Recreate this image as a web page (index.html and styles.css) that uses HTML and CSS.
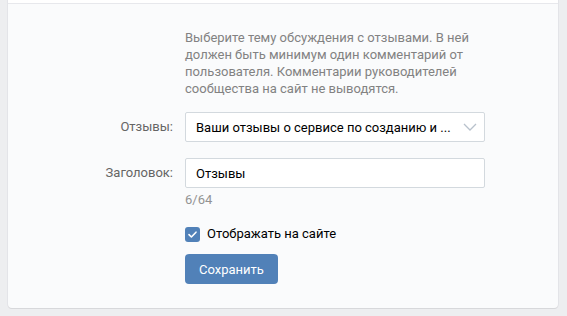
FILE: index.html
```html
<!DOCTYPE html>
<html lang="ru">
<head>
    <meta charset="UTF-8">
    <meta name="viewport" content="width=device-width, initial-scale=1.0">
    <title>Отзывы</title>
    <link rel="stylesheet" href="styles.css">
</head>
<body>
    <div class="card">
        <div class="card-top"></div>
        <div class="settings">
            <div class="row">
                <div class="row-label"></div>
                <div class="row-control">
                    <p class="hint">Выберите тему обсуждения с отзывами. В ней должен быть минимум один комментарий от пользователя. Комментарии руководителей сообщества на сайт не выводятся.</p>
                </div>
            </div>
            <div class="row row-field">
                <div class="row-label">Отзывы:</div>
                <div class="row-control">
                    <div class="dropdown">
                        <span class="dropdown-value">Ваши отзывы о сервисе по созданию и ...</span>
                        <svg class="dropdown-arrow" width="14" height="8" viewBox="0 0 14 8">
                            <path d="M1 1l6 6 6-6" fill="none" stroke="#b8c1cc" stroke-width="1.3"/>
                        </svg>
                    </div>
                </div>
            </div>
            <div class="row">
                <div class="row-label">Заголовок:</div>
                <div class="row-control">
                    <input class="text-input" type="text" value="Отзывы">
                    <div class="counter">6/64</div>
                </div>
            </div>
            <div class="row">
                <div class="row-label"></div>
                <div class="row-control">
                    <label class="checkbox">
                        <span class="checkbox-box">
                            <svg width="15" height="15" viewBox="0 0 15 15">
                                <path d="M4 7.6l2.4 2.4 4.6-4.8" fill="none" stroke="#fff" stroke-width="1.6" stroke-linecap="round" stroke-linejoin="round"/>
                            </svg>
                        </span>
                        Отображать на сайте
                    </label>
                    <button class="save-button">Сохранить</button>
                </div>
            </div>
        </div>
    </div>
</body>
</html>
```

FILE: styles.css
```css
body {
    margin: 0;
    padding: 0 9px 7px 8px;
    background-color: #edeef0;
    font-family: Roboto, "Noto Sans", Arial, sans-serif;
    font-size: 13px;
    color: #000;
}
.card {
    background: #fafbfc;
    border-radius: 0 0 4px 4px;
    box-shadow: 0 1px 0 0 #d7d8db, 0 0 0 1px #e3e4e8;
}
.card-top {
    height: 3px;
    background: #fff;
    border-bottom: 1px solid #e7e8ec;
}
.settings {
    padding: 25px 0 24px;
}
.row {
    display: grid;
    grid-template-columns: 165px 300px;
    column-gap: 12px;
}
.row-field {
    margin-bottom: 16px;
}
.row-label {
    text-align: right;
    color: #656565;
    line-height: 30px;
}
.hint {
    margin: 0 0 15px;
    color: #828282;
    line-height: 17px;
    padding-right: 10px;
}
.dropdown {
    height: 30px;
    box-sizing: border-box;
    border: 1px solid #d3d9de;
    border-radius: 2px;
    background: #fff;
    display: flex;
    align-items: center;
    padding: 0 9px 0 10px;
    gap: 12px;
}
.dropdown-value {
    flex: 1;
    white-space: nowrap;
}
.dropdown-arrow {
    flex-shrink: 0;
}
.text-input {
    display: block;
    width: 100%;
    height: 30px;
    box-sizing: border-box;
    border: 1px solid #d3d9de;
    border-radius: 2px;
    background: #fff;
    padding: 0 10px;
    font-family: inherit;
    font-size: 13px;
    color: #000;
    outline: none;
}
.counter {
    margin-top: 3px;
    color: #939393;
    line-height: 18px;
}
.checkbox {
    display: flex;
    align-items: center;
    gap: 7px;
    line-height: 18px;
    margin-top: 16px;
}
.checkbox-box {
    width: 15px;
    height: 15px;
    border-radius: 3px;
    background: #5181b8;
    display: flex;
}
.save-button {
    display: block;
    margin-top: 11px;
    height: 30px;
    padding: 0 14px;
    border: none;
    border-radius: 4px;
    background: #5181b8;
    color: #fff;
    font-family: inherit;
    font-size: 13px;
    cursor: pointer;
}
```
